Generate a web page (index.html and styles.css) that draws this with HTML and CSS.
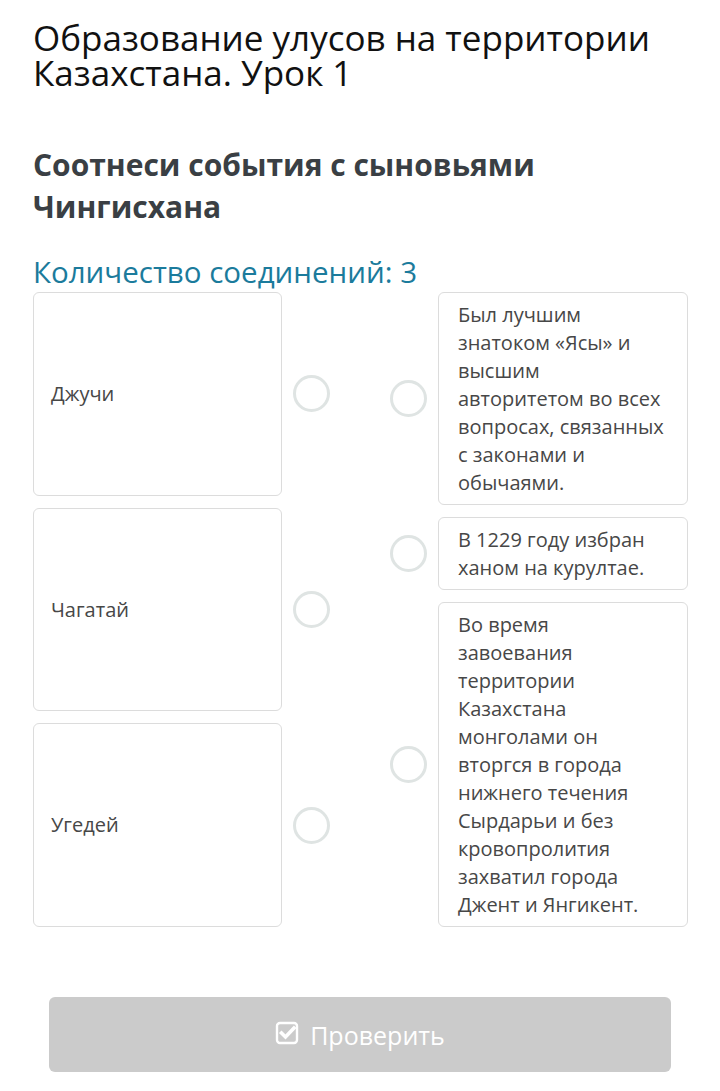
FILE: index.html
```html
<!DOCTYPE html>
<html lang="ru">
<head>
<meta charset="utf-8">
<title>Образование улусов</title>
<link rel="stylesheet" href="styles.css">
</head>
<body>
<main class="page">
  <h1 class="title">Образование улусов на территории Казахстана. Урок 1</h1>
  <h2 class="task">Соотнеси события с сыновьями Чингисхана</h2>
  <div class="count">Количество соединений: 3</div>

  <div class="match">
    <div class="col col-left">
      <div class="row-left">
        <div class="card card-left">Джучи</div>
        <div class="dot-cell"><span class="dot"></span></div>
      </div>
      <div class="row-left">
        <div class="card card-left">Чагатай</div>
        <div class="dot-cell"><span class="dot"></span></div>
      </div>
      <div class="row-left">
        <div class="card card-left">Угедей</div>
        <div class="dot-cell"><span class="dot"></span></div>
      </div>
    </div>
    <div class="col col-right">
      <div class="row-right">
        <div class="dot-cell"><span class="dot"></span></div>
        <div class="card card-right">Был лучшим знатоком «Ясы» и высшим авторитетом во всех вопросах, связанных с законами и обычаями.</div>
      </div>
      <div class="row-right">
        <div class="dot-cell"><span class="dot"></span></div>
        <div class="card card-right">В 1229 году избран ханом на курултае.</div>
      </div>
      <div class="row-right">
        <div class="dot-cell"><span class="dot"></span></div>
        <div class="card card-right">Во время завоевания территории Казахстана монголами он вторгся в города нижнего течения Сырдарьи и без кровопролития захватил города Джент и Янгикент.</div>
      </div>
    </div>
  </div>

  <button class="check-btn" type="button">
    <svg class="check-icon" viewBox="0 0 24 24" width="24" height="24" aria-hidden="true">
      <rect x="2" y="2" width="20" height="20" rx="3" fill="none" stroke="#fff" stroke-width="2.4"/>
      <path d="M6.5 12 L10.5 16 L19 7" fill="none" stroke="#fff" stroke-width="3.6" stroke-linecap="square" stroke-linejoin="miter"/>
    </svg>
    <span>Проверить</span>
  </button>
</main>
</body>
</html>
```
FILE: styles.css
```css
* { box-sizing: border-box; }

body {
  margin: 0;
  background: #fff;
  font-family: "Open Sans", "Noto Sans", sans-serif;
}

.page {
  padding: 20px 32px 0 33px;
}

.title {
  margin: 0;
  font-size: 35px;
  line-height: 35px;
  font-weight: 400;
  color: #111;
}

.task {
  margin: 54px 0 0;
  font-size: 30px;
  line-height: 42px;
  font-weight: 700;
  color: #3a3f44;
}

.count {
  margin-top: 26px;
  font-size: 29.5px;
  line-height: 36px;
  color: #1b7b9c;
}

.match {
  margin-top: 2px;
  display: grid;
  grid-template-columns: 1fr 1fr;
  align-items: stretch;
}

.col {
  display: flex;
  flex-direction: column;
  gap: 12px;
}

.row-left {
  flex: 1;
  display: flex;
}

.row-right {
  display: flex;
}

.card {
  border: 1px solid #dcdcdc;
  border-radius: 6px;
  background: #fff;
  color: #474747;
  font-size: 20px;
  line-height: 28px;
}

.card-left {
  width: 249px;
  display: flex;
  align-items: center;
  padding: 7px 17px;
}

.card-right {
  width: 250px;
  padding: 7.5px 22px 7.5px 19px;
}

.dot-cell {
  flex: 1;
  display: flex;
  align-items: center;
  justify-content: center;
}

.row-left .dot-cell { justify-content: flex-start; padding-left: 11px; }
.row-right .dot-cell { justify-content: flex-end; padding-right: 11px; }

.dot {
  width: 37px;
  height: 37px;
  border-radius: 50%;
  border: 3px solid #dfe4e3;
}

.check-btn {
  margin: 70px 17px 0 16px;
  width: calc(100% - 33px);
  height: 75px;
  border: none;
  border-radius: 6px;
  background: #cbcbcb;
  color: #fff;
  font-family: "Open Sans", "Noto Sans", sans-serif;
  font-size: 25px;
  display: flex;
  align-items: center;
  justify-content: center;
  gap: 11px;
}

.check-icon { display: block; margin-top: -3px; }
```
